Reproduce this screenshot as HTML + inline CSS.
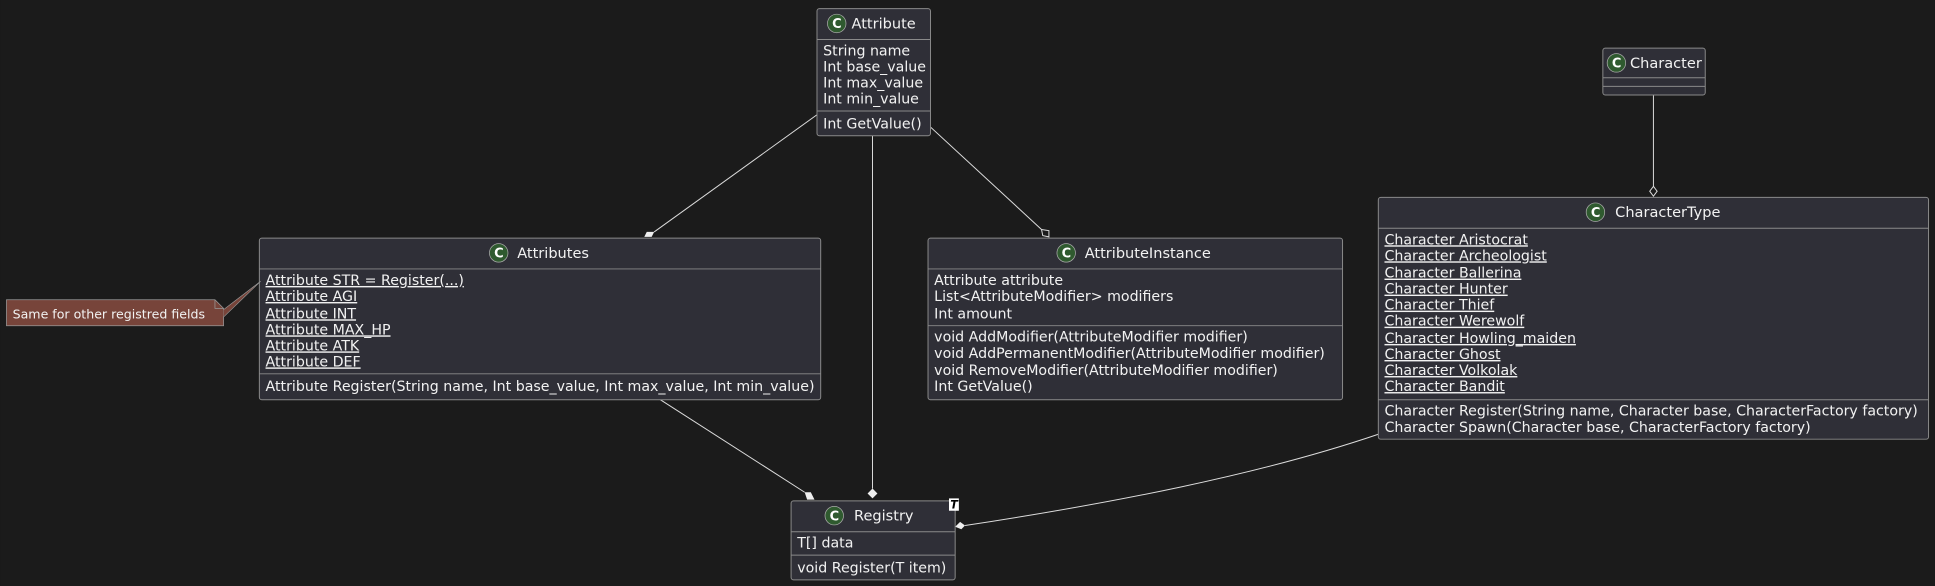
<!DOCTYPE html>
<html><head><meta charset="utf-8">
<style>
html,body{margin:0;padding:0;background:#1b1b1b;width:1935px;height:586px;overflow:hidden}
svg{display:block}
text{font-family:"DejaVu Sans","Liberation Sans",sans-serif;fill:#f2f2f2;font-size:11.5px}
.t{font-size:11.8px}
.u{text-decoration:underline}
.box{fill:#2f2f37;stroke:#8a8a8a;stroke-width:0.8}
.ln{stroke:#8a8a8a;stroke-width:0.8}
.e{stroke:#dcdcdc;stroke-width:0.8;fill:none}
.c{fill:#2f5a2f;stroke:#aaa;stroke-width:0.6}
.ct{font-weight:bold;font-size:10.5px;fill:#fff}
</style></head><body>
<svg width="1935" height="586" viewBox="0 0 1568 475" xmlns="http://www.w3.org/2000/svg">
<rect width="1568" height="475" fill="#1b1b1b"/>

<path class="e" d="M662,93 L530,188"/>
<polygon points="530,188 528,192 522,192 524,188" fill="#eee"/>
<path class="e" d="M707,110 L707,396"/>
<polygon points="707,396 711,400 707,404 703,400" fill="#eee"/>
<path class="e" d="M754,103 L844,186"/>
<polygon points="844,186 850,187 850,192 845,191" fill="#1b1b1b" stroke="#ddd" stroke-width="0.8"/>
<path class="e" d="M1340,77 L1340,151"/>
<polygon points="1340,151 1343,155 1340,159 1337,155" fill="#1b1b1b" stroke="#ddd" stroke-width="0.8"/>
<path class="e" d="M535,324 L652,399"/>
<polygon points="652,399 657,399 660,405 654,405" fill="#eee"/>
<path class="e" d="M1117,352 C1020,385 900,408 782,426"/>
<polygon points="782,426 778,423 774,427 779,429" fill="#eee"/>

<rect class="box" x="662" y="7" width="92" height="103" rx="2"/>
<circle class="c" cx="678" cy="19" r="7.5"/><text class="ct" x="674.3" y="22.8">C</text>
<text class="t" x="690" y="23">Attribute</text>
<line class="ln" x1="662" y1="32" x2="754" y2="32"/>
<text x="667" y="45">String name</text>
<text x="667" y="58">Int base_value</text>
<text x="667" y="71">Int max_value</text>
<text x="667" y="84">Int min_value</text>
<line class="ln" x1="662" y1="90" x2="754" y2="90"/>
<text x="667" y="104">Int GetValue()</text>

<rect class="box" x="1299" y="39" width="83" height="38" rx="2"/>
<circle class="c" cx="1310" cy="51" r="7.5"/><text class="ct" x="1306.3" y="54.8">C</text>
<text class="t" x="1321" y="55">Character</text>
<line class="ln" x1="1299" y1="63" x2="1382" y2="63"/>
<line class="ln" x1="1299" y1="70" x2="1382" y2="70"/>

<rect class="box" x="210" y="193" width="455" height="131" rx="2"/>
<circle class="c" cx="404" cy="205" r="7.5"/><text class="ct" x="400.3" y="208.8">C</text>
<text class="t" x="419" y="209">Attributes</text>
<line class="ln" x1="210" y1="218" x2="665" y2="218"/>
<text class="u" x="215" y="231">Attribute STR = Register(...)</text>
<text class="u" x="215" y="244">Attribute AGI</text>
<text class="u" x="215" y="258">Attribute INT</text>
<text class="u" x="215" y="271">Attribute MAX_HP</text>
<text class="u" x="215" y="284">Attribute ATK</text>
<text class="u" x="215" y="297">Attribute DEF</text>
<line class="ln" x1="210" y1="303" x2="665" y2="303"/>
<text x="215" y="317">Attribute Register(String name, Int base_value, Int max_value, Int min_value)</text>

<path d="M5,243 L174,243 L181,250 L181,264 L5,264 Z" fill="#77443a" stroke="#999" stroke-width="0.6"/>
<path d="M174,243 L174,250 L181,250" fill="none" stroke="#999" stroke-width="0.6"/>
<path d="M181,251 L211,228 L181,257 Z" fill="#77443a"/>
<path d="M181,251 L211,228 L181,257" fill="none" stroke="#999" stroke-width="0.5"/>
<text x="10" y="258" style="font-size:10.2px">Same for other registred fields</text>

<rect class="box" x="752" y="193" width="336" height="131" rx="2"/>
<circle class="c" cx="864" cy="205" r="7.5"/><text class="ct" x="860.3" y="208.8">C</text>
<text class="t" x="879" y="209">AttributeInstance</text>
<line class="ln" x1="752" y1="218" x2="1088" y2="218"/>
<text x="757" y="231">Attribute attribute</text>
<text x="757" y="244">List&lt;AttributeModifier&gt; modifiers</text>
<text x="757" y="258">Int amount</text>
<line class="ln" x1="752" y1="264" x2="1088" y2="264"/>
<text x="757" y="277">void AddModifier(AttributeModifier modifier)</text>
<text x="757" y="290">void AddPermanentModifier(AttributeModifier modifier)</text>
<text x="757" y="304">void RemoveModifier(AttributeModifier modifier)</text>
<text x="757" y="317">Int GetValue()</text>

<rect class="box" x="1117" y="160" width="446" height="196" rx="2"/>
<circle class="c" cx="1293" cy="172" r="7.5"/><text class="ct" x="1289.3" y="175.8">C</text>
<text class="t" x="1309" y="176">CharacterType</text>
<line class="ln" x1="1117" y1="185" x2="1563" y2="185"/>
<text class="u" x="1122" y="198">Character Aristocrat</text>
<text class="u" x="1122" y="211">Character Archeologist</text>
<text class="u" x="1122" y="225">Character Ballerina</text>
<text class="u" x="1122" y="238">Character Hunter</text>
<text class="u" x="1122" y="251">Character Thief</text>
<text class="u" x="1122" y="264">Character Werewolf</text>
<text class="u" x="1122" y="278">Character Howling_maiden</text>
<text class="u" x="1122" y="291">Character Ghost</text>
<text class="u" x="1122" y="304">Character Volkolak</text>
<text class="u" x="1122" y="317">Character Bandit</text>
<line class="ln" x1="1117" y1="324" x2="1563" y2="324"/>
<text x="1122" y="337">Character Register(String name, Character base, CharacterFactory factory)</text>
<text x="1122" y="350">Character Spawn(Character base, CharacterFactory factory)</text>

<rect class="box" x="641" y="406" width="133" height="64" rx="2"/>
<circle class="c" cx="676" cy="418" r="7.5"/><text class="ct" x="672.3" y="421.8">C</text>
<text class="t" x="692" y="422">Registry</text>
<line class="ln" x1="641" y1="431" x2="774" y2="431"/>
<text x="646" y="444">T[] data</text>
<line class="ln" x1="641" y1="450" x2="774" y2="450"/>
<text x="646" y="464">void Register(T item)</text>
<rect x="769" y="404" width="8" height="10" fill="#fff"/>
<text x="770" y="412" style="fill:#000;font-style:italic;font-weight:bold;font-size:9px">T</text>
</svg>
</body></html>
